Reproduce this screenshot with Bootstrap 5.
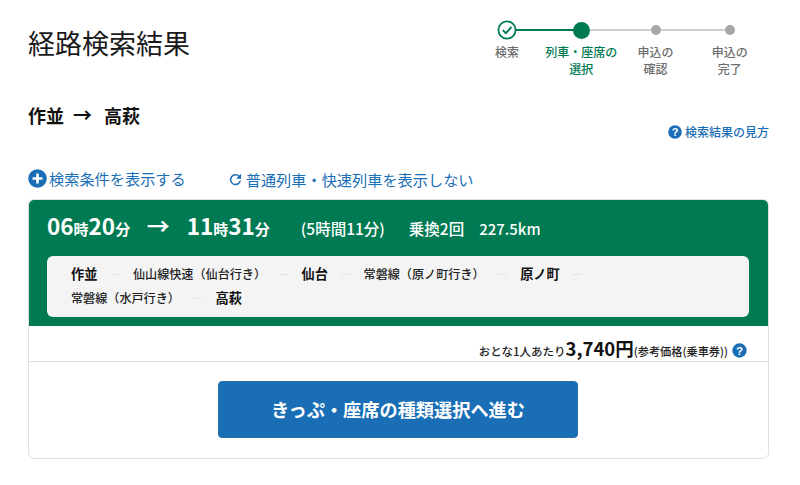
<!DOCTYPE html>
<html lang="ja">
<head>
<meta charset="utf-8">
<title>経路検索結果</title>
<link href="https://cdn.jsdelivr.net/npm/bootstrap@5.3.0/dist/css/bootstrap.min.css" rel="stylesheet">
<style>
html,body{height:485px;overflow:hidden}
body{font-family:"Noto Sans CJK JP","Noto Sans",sans-serif;color:#1a1a1a;background:#fff}
.pg{padding:0 31px 0 28px}
.top-area{height:100px}
.ttl{font-size:27px;font-weight:400;line-height:40px;margin:23px 0 0 0;letter-spacing:0}
.stepper{width:297px;margin-right:2px;margin-top:20px}
.stp{width:74.25px;text-align:center;position:relative;font-size:12px;line-height:17px;font-weight:500;color:#6e6e6e}
.stp.on{color:#007a53}
.dotwrap{height:20px;display:flex;align-items:center;justify-content:center;margin-bottom:3px;position:relative}
.dotwrap svg{position:relative;z-index:1;display:block}
.ln{position:absolute;height:2px;top:9px;left:50%;width:100%;background:#d0d0d0}
.ln.g{background:#007a53}
.dotg{width:17px;height:17px;border-radius:50%;background:#007a53;position:relative;z-index:1}
.dotn{width:10px;height:10px;border-radius:50%;background:#a6a6a6;position:relative;z-index:1}
.route-row{height:60px;font-size:18px;font-weight:700;line-height:30px;color:#111}
.route-row .arr{margin:0 12px 0 9px;font-weight:700;font-size:19px}
.howto{font-size:12px;font-weight:500;color:#1a6eb5;line-height:16px;margin-top:24px;margin-left:-1px;gap:3px;align-self:flex-start}
.lnk-row{height:30px;margin-top:8px;color:#1a6eb5}
.lnk-a{font-size:15.2px;gap:2px;line-height:20px;margin-top:0}
.lnk-b{font-size:15.2px;margin-left:43px;gap:4px;line-height:20px;margin-top:1px}
.res{border:1px solid #e0e0e0;border-radius:6px;margin-top:1px;height:260px;overflow:hidden;background:#fff}
.grn{background:#007a53;height:127px;margin:-1px -1px 0;padding:0 20px 9px 19px;color:#fff}
.tm{height:57px;font-weight:700;font-size:22.5px;line-height:53px;white-space:nowrap}
.tm small{font-size:15px;font-weight:700}
.tm .a2{font-size:23px;font-weight:700;margin:0 17px 0 16.5px}
.tm .d1{font-size:15.5px;font-weight:500;margin-left:31px}
.tm .d2{font-size:15.5px;font-weight:500;margin-left:24px}
.tm .d3{font-size:15px;font-weight:500;margin-left:15px}
.rbox{background:#f4f4f4;border-radius:6px;height:61px;padding:6px 23px 0 24px;font-size:12.1px;line-height:24px;color:#222;font-weight:500}
.rbox b{font-size:13.2px;line-height:1;font-weight:700;color:#111}
.rbox i{font-style:normal;line-height:1;color:#b4b4b4;font-weight:300;font-size:10px;margin:0 12.8px}
.price{height:36px;border-bottom:1px solid #e0e0e0;padding:9px 21px 0 0;font-size:11.5px;line-height:27px;font-weight:500;color:#222}
.price strong{font-size:18.5px;font-weight:700;color:#111;line-height:27px}
.price .pn{font-size:11.2px}
.price svg{align-self:flex-start;margin-top:8px}
.actbtn{width:360px;height:57px;margin-left:-1px;background:#1a6eb5;border:1px solid #2a6da8;border-radius:4px;color:#fff;font-size:18.2px;font-weight:700;display:flex;align-items:center;justify-content:center}
.btnw{padding-top:19px}
.actbtn:hover{background:#1a6eb5;color:#fff}
</style>
</head>
<body>
<div class="pg">
  <div class="top-area d-flex justify-content-between align-items-start">
    <h1 class="ttl">経路検索結果</h1>
    <div class="stepper d-flex">
      <div class="stp">
        <div class="dotwrap"><span class="ln g"></span>
          <svg width="20" height="20" viewBox="0 0 20 20"><circle cx="10" cy="10" r="8.6" fill="#fff" stroke="#007a53" stroke-width="1.8"/><path d="M5.8 10.2l3 3 5.6-6.2" fill="none" stroke="#007a53" stroke-width="1.9"/></svg>
        </div>検索</div>
      <div class="stp on"><div class="dotwrap"><span class="ln"></span><span class="dotg"></span></div>列車・座席の<br>選択</div>
      <div class="stp"><div class="dotwrap"><span class="ln"></span><span class="dotn"></span></div>申込の<br>確認</div>
      <div class="stp"><div class="dotwrap"><span class="dotn"></span></div>申込の<br>完了</div>
    </div>
  </div>
  <div class="route-row d-flex justify-content-between">
    <div>作並<span class="arr">→</span>高萩</div>
    <div class="howto d-flex align-items-center">
      <svg width="14" height="14" viewBox="0 0 14 14"><circle cx="7" cy="7" r="6.8" fill="#1a6eb5"/><text x="7" y="10.8" text-anchor="middle" font-size="11" font-weight="700" fill="#fff" font-family="Liberation Sans">?</text></svg>
      検索結果の見方</div>
  </div>
  <div class="lnk-row d-flex align-items-start">
    <div class="lnk-a d-flex align-items-center">
      <svg width="19" height="19" viewBox="0 0 19 19"><circle cx="9.5" cy="9.5" r="9.3" fill="#1a6eb5"/><path d="M4.5 9.5h10M9.5 4.5v10" stroke="#fff" stroke-width="2.6"/></svg>
      検索条件を表示する</div>
    <div class="lnk-b d-flex align-items-center">
      <svg width="13" height="13" viewBox="0 0 13 13"><path d="M10.2 3.4A4.9 4.9 0 1 0 11.3 7.6" fill="none" stroke="#1a6eb5" stroke-width="1.5"/><path d="M12 .8v5H7.2z" fill="#1a6eb5"/></svg>
      普通列車・快速列車を表示しない</div>
  </div>
  <div class="res">
    <div class="grn">
      <div class="tm">06<small>時</small>20<small>分</small><span class="a2">→</span>11<small>時</small>31<small>分</small><span class="d1">(5時間11分)</span><span class="d2">乗換2回</span><span class="d3">227.5km</span></div>
      <div class="rbox"><b>作並</b><i>—</i>仙山線快速（仙台行き）<i>—</i><b>仙台</b><i>—</i>常磐線（原ノ町行き）<i>—</i><b>原ノ町</b><i>—</i><br>常磐線（水戸行き）<i>—</i><b>高萩</b></div>
    </div>
    <div class="price d-flex justify-content-end align-items-baseline">
      <span>おとな1人あたり</span><strong>3,740円</strong><span class="pn">(参考価格(乗車券))</span>
      <svg class="ms-1" width="15" height="15" viewBox="0 0 15 15"><circle cx="7.5" cy="7.5" r="7.2" fill="#1a6eb5"/><text x="7.5" y="11.5" text-anchor="middle" font-size="11.5" font-weight="700" fill="#fff" font-family="Liberation Sans">?</text></svg>
    </div>
    <div class="btnw d-flex justify-content-center">
      <a class="btn actbtn" href="#">きっぷ・座席の種類選択へ進む</a>
    </div>
  </div>
</div>
<script src="https://cdn.jsdelivr.net/npm/bootstrap@5.3.0/dist/js/bootstrap.bundle.min.js"></script>
</body>
</html>
